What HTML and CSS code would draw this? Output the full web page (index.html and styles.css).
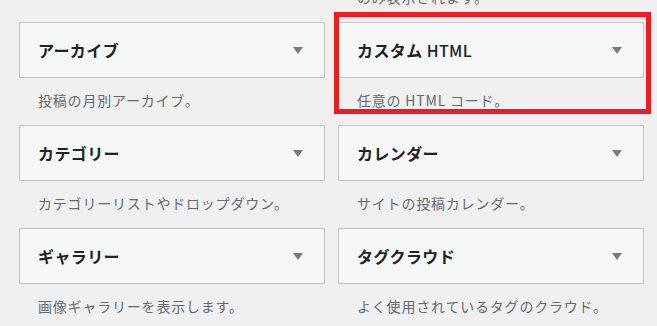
FILE: index.html
```html
<!DOCTYPE html>
<html lang="ja">
<head>
  <meta charset="UTF-8" />
  <meta name="viewport" content="width=device-width, initial-scale=1.0"/>
  <title>ウィジェット</title>
  <link rel="stylesheet" href="styles.css">
</head>
<body>
  <div class="widget-list">
    <p class="widget-desc tail">のみ表示されます。</p>

    <div class="widget">
      <div class="widget-top">
        <h3 class="widget-title">アーカイブ</h3>
        <span class="toggle"></span>
      </div>
      <p class="widget-desc">投稿の月別アーカイブ。</p>
    </div>

    <div class="widget">
      <div class="widget-top">
        <h3 class="widget-title">カスタム <span class="latin">HTML</span></h3>
        <span class="toggle"></span>
      </div>
      <p class="widget-desc">任意の HTML コード。</p>
    </div>

    <div class="widget">
      <div class="widget-top">
        <h3 class="widget-title">カテゴリー</h3>
        <span class="toggle"></span>
      </div>
      <p class="widget-desc">カテゴリーリストやドロップダウン。</p>
    </div>

    <div class="widget">
      <div class="widget-top">
        <h3 class="widget-title">カレンダー</h3>
        <span class="toggle"></span>
      </div>
      <p class="widget-desc">サイトの投稿カレンダー。</p>
    </div>

    <div class="widget">
      <div class="widget-top">
        <h3 class="widget-title">ギャラリー</h3>
        <span class="toggle"></span>
      </div>
      <p class="widget-desc">画像ギャラリーを表示します。</p>
    </div>

    <div class="widget">
      <div class="widget-top">
        <h3 class="widget-title">タグクラウド</h3>
        <span class="toggle"></span>
      </div>
      <p class="widget-desc">よく使用されているタグのクラウド。</p>
    </div>
  </div>

  <div class="highlight"></div>
</body>
</html>
```

FILE: styles.css
```css
body {
  margin: 0;
  background-color: #f0f0f1;
  font-family: "Noto Sans CJK JP", "Noto Sans", sans-serif;
  color: #1d2327;
  position: relative;
  overflow: hidden;
}
.widget-list {
  display: grid;
  grid-template-columns: 306px 306px;
  column-gap: 13px;
  row-gap: 15px;
  padding-left: 19px;
  margin-top: -13px;
}
.widget-top {
  height: 56px;
  box-sizing: border-box;
  background-color: #f6f7f7;
  border: 1px solid #c3c4c7;
  display: flex;
  align-items: center;
  justify-content: space-between;
  padding: 0 21px 0 18px;
}
.widget-title {
  margin: 0;
  font-size: 16px;
  font-weight: 700;
  line-height: 20px;
  letter-spacing: 0.4px;
}
.widget-title .latin {
  font-weight: 500;
}
.toggle {
  width: 0;
  height: 0;
  border-left: 5px solid transparent;
  border-right: 5px solid transparent;
  border-top: 7px solid #787c82;
}
.widget-desc {
  margin: 12px 0 0 19px;
  font-size: 14px;
  line-height: 20px;
  letter-spacing: 0.8px;
  color: #646970;
}
.widget-desc.tail {
  grid-column: 2;
  margin-top: 0;
}
.highlight {
  position: absolute;
  left: 334px;
  top: 12px;
  width: 317px;
  height: 102px;
  box-sizing: border-box;
  border: 5px solid #ed1c24;
}
```
